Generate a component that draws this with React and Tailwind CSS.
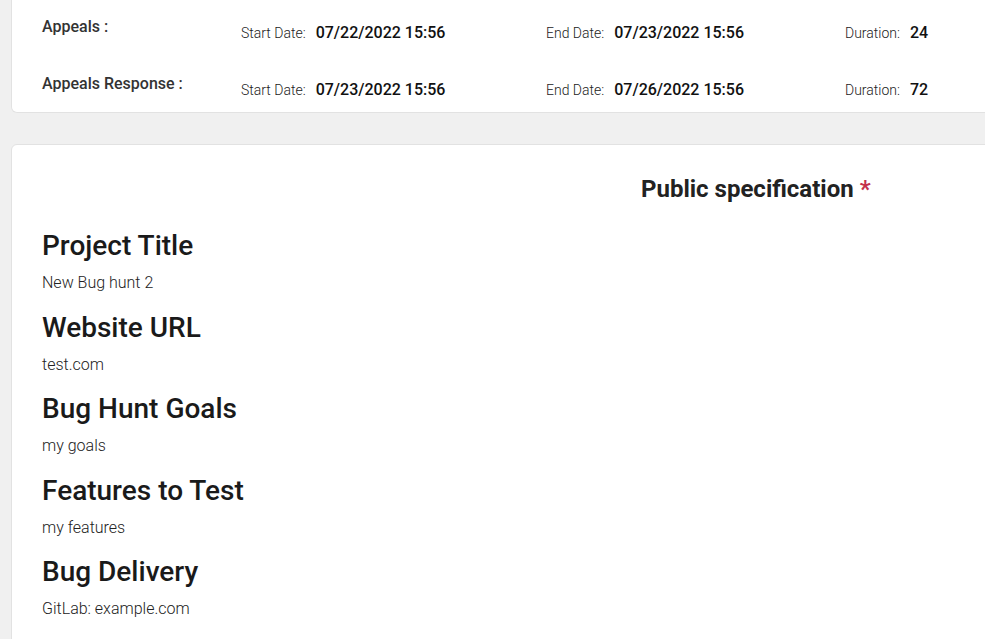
export default function App() {
  const rows = [
    { label: "Appeals :", start: "07/22/2022 15:56", end: "07/23/2022 15:56", dur: "24" },
    { label: "Appeals Response :", start: "07/23/2022 15:56", end: "07/26/2022 15:56", dur: "72" },
  ];
  const sections = [
    ["Project Title", "New Bug hunt 2"],
    ["Website URL", "test.com"],
    ["Bug Hunt Goals", "my goals"],
    ["Features to Test", "my features"],
    ["Bug Delivery", "GitLab: example.com"],
  ];
  return (
    <div
      className="w-[985px] h-[639px] overflow-hidden bg-[#f0f0f0] pl-[11px]"
      style={{ fontFamily: "Roboto, 'Liberation Sans', sans-serif" }}
    >
      <div className="w-[1100px] bg-white border border-t-0 border-[#e2e2e2] rounded-b-[6px] pl-[30px] pt-[15px] pb-[12px] flex flex-col gap-[29px]">
        {rows.map((r) => (
          <div key={r.label} className="grid grid-cols-[199px_305px_299px_1fr] items-start h-[28px]">
            <div className="text-[16px] font-medium text-[#333] leading-[24px]">{r.label}</div>
            <div className="flex items-baseline gap-[10px] pt-[6px]">
              <span className="text-[14px] font-light text-[#222]">Start Date:</span>
              <span className="text-[16px] font-medium text-[#111]">{r.start}</span>
            </div>
            <div className="flex items-baseline gap-[10px] pt-[6px]">
              <span className="text-[14px] font-light text-[#222]">End Date:</span>
              <span className="text-[16px] font-medium text-[#111]">{r.end}</span>
            </div>
            <div className="flex items-baseline gap-[10px] pt-[6px]">
              <span className="text-[14px] font-light text-[#222]">Duration:</span>
              <span className="text-[16px] font-medium text-[#111]">{r.dur}</span>
            </div>
          </div>
        ))}
      </div>
      <div className="mt-[31px] w-[1100px] bg-white border border-[#e2e2e2] rounded-[6px] pl-[30px] pt-[27px] h-[600px]">
        <h2 className="pl-[599px] text-[24px] font-bold text-[#222] leading-[34px]">
          Public specification <span className="text-[#c4314b]">*</span>
        </h2>
        <div className="mt-[22px] flex flex-col">
          {sections.map(([h, b]) => (
            <div key={h} className="h-[81.5px]">
              <div className="text-[28px] font-medium text-[#1a1a1a] leading-[36px]">{h}</div>
              <div className="text-[16px] font-light text-[#222] leading-[20px] mt-[9px]">{b}</div>
            </div>
          ))}
        </div>
      </div>
    </div>
  );
}
